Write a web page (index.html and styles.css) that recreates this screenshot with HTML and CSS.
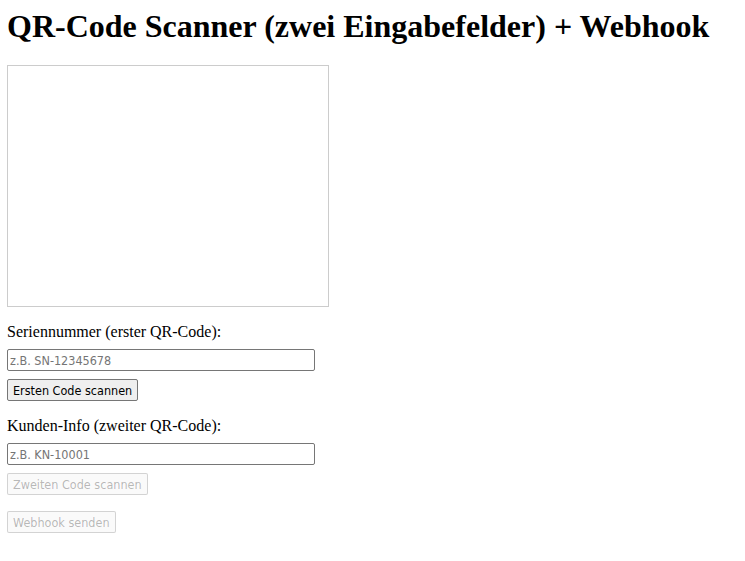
FILE: index.html
```html
<!DOCTYPE html>
<html lang="de">
<head>
<meta charset="utf-8">
<title>QR-Code Scanner</title>
<link rel="stylesheet" href="styles.css">
</head>
<body>
<h1 class="title">QR-Code Scanner (zwei Eingabefelder) + Webhook</h1>
<div class="reader"></div>
<div class="field">
  <label class="label" for="serial">Seriennummer (erster QR-Code):</label>
  <input class="input" id="serial" type="text" placeholder="z.B. SN-12345678">
  <button class="btn">Ersten Code scannen</button>
</div>
<div class="field">
  <label class="label" for="customer">Kunden-Info (zweiter QR-Code):</label>
  <input class="input" id="customer" type="text" placeholder="z.B. KN-10001">
  <button class="btn" disabled>Zweiten Code scannen</button>
</div>
<div class="field">
  <button class="btn" disabled>Webhook senden</button>
</div>
</body>
</html>
```
FILE: styles.css
```css
body {
  margin: 8px 7px;
  font-family: "Liberation Serif", "Times New Roman", serif;
  font-size: 16px;
  color: #000;
  background: #fff;
}
.title {
  font-size: 32px;
  font-weight: bold;
  margin: 0 0 20px;
  line-height: 37px;
}
.reader {
  width: 320px;
  height: 240px;
  border: 1px solid #ccc;
}
.field {
  margin-top: 16px;
}
.label {
  display: block;
  line-height: 18px;
  margin-bottom: 8px;
}
.input {
  display: block;
  box-sizing: border-box;
  width: 308px;
  height: 22px;
  margin: 0 0 8px;
  padding: 1px 2px;
  border: 1px solid #767676;
  border-radius: 2px;
  font-family: "DejaVu Sans Condensed", "DejaVu Sans", Tahoma, sans-serif;
  font-size: 12.5px;
}
.input::placeholder {
  color: #757575;
}
.btn {
  display: block;
  box-sizing: border-box;
  height: 22px;
  padding: 1px 5px;
  border: 1px solid #767676;
  border-radius: 2px;
  background: #efefef;
  color: #000;
  font-family: "DejaVu Sans Condensed", "DejaVu Sans", Tahoma, sans-serif;
  font-size: 12.5px;
}
.btn:disabled {
  border-color: rgba(118, 118, 118, 0.3);
  background: rgba(239, 239, 239, 0.3);
  color: rgba(16, 16, 16, 0.3);
}
```
